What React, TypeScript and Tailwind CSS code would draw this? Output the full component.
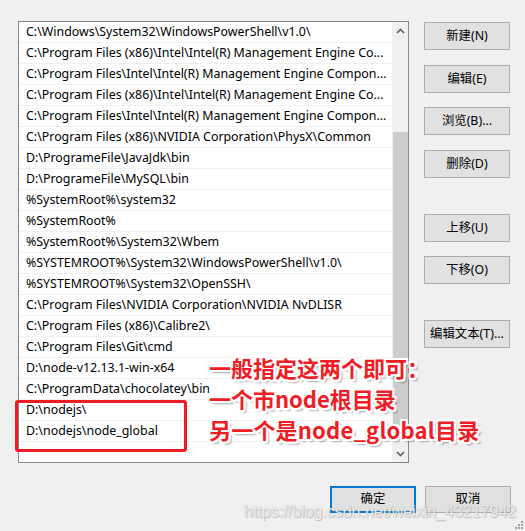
import React from 'react';

const paths = [
  'C:\\Windows\\System32\\WindowsPowerShell\\v1.0\\',
  'C:\\Program Files (x86)\\Intel\\Intel(R) Management Engine Co...',
  'C:\\Program Files\\Intel\\Intel(R) Management Engine Compon...',
  'C:\\Program Files (x86)\\Intel\\Intel(R) Management Engine Co...',
  'C:\\Program Files\\Intel\\Intel(R) Management Engine Compon...',
  'C:\\Program Files (x86)\\NVIDIA Corporation\\PhysX\\Common',
  'D:\\ProgrameFile\\JavaJdk\\bin',
  'D:\\ProgrameFile\\MySQL\\bin',
  '%SystemRoot%\\system32',
  '%SystemRoot%',
  '%SystemRoot%\\System32\\Wbem',
  '%SYSTEMROOT%\\System32\\WindowsPowerShell\\v1.0\\',
  '%SYSTEMROOT%\\System32\\OpenSSH\\',
  'C:\\Program Files\\NVIDIA Corporation\\NVIDIA NvDLISR',
  'C:\\Program Files (x86)\\Calibre2\\',
  'C:\\Program Files\\Git\\cmd',
  'D:\\node-v12.13.1-win-x64',
  'C:\\ProgramData\\chocolatey\\bin',
  'D:\\nodejs\\',
  'D:\\nodejs\\node_global',
];

const font = { fontFamily: '"Noto Sans", "Noto Sans CJK SC", sans-serif' };

const Btn = ({ label, className = '' }: { label: string; className?: string }) => (
  <div
    className={`w-[86px] h-[28px] flex items-center justify-center bg-[#e1e1e1] border border-[#adadad] text-[12.4px] text-black ${className}`}
  >
    {label}
  </div>
);

const App = () => {
  return (
    <div className="relative w-[525px] h-[531px] bg-[#f0f0f0] overflow-hidden" style={font}>
      <div className="flex">
        {/* path list */}
        <div className="ml-[18px] mt-[21px] w-[391px] h-[442px] border border-[#828790] bg-white flex">
          <div className="w-[373px] flex flex-col">
            {paths.map((p, i) => (
              <div
                key={i}
                className="h-[21px] shrink-0 border-b border-[#f0f0f0] px-[7px] flex items-center text-[12.4px] text-black whitespace-nowrap overflow-hidden"
              >
                {p}
              </div>
            ))}
          </div>
          <div className="w-[16px] bg-[#f0f0f0] flex flex-col items-center">
            <div className="h-[17px] flex items-center justify-center">
              <svg width="9" height="6" viewBox="0 0 9 6">
                <path d="M1 5 L4.5 1.5 L8 5" stroke="#606060" strokeWidth="1.6" fill="none" />
              </svg>
            </div>
            <div className="mt-[93px] w-[15px] h-[304px] bg-[#cdcdcd]" />
            <div className="flex-1" />
            <div className="h-[17px] flex items-center justify-center">
              <svg width="9" height="6" viewBox="0 0 9 6">
                <path d="M1 1 L4.5 4.5 L8 1" stroke="#606060" strokeWidth="1.6" fill="none" />
              </svg>
            </div>
          </div>
        </div>

        {/* side buttons */}
        <div className="ml-[15px] flex flex-col">
          <Btn label="新建(N)" className="mt-[22px]" />
          <Btn label="编辑(E)" className="mt-[15px]" />
          <Btn label="浏览(B)..." className="mt-[14px]" />
          <Btn label="删除(D)" className="mt-[15px]" />
          <Btn label="上移(U)" className="mt-[36px]" />
          <Btn label="下移(O)" className="mt-[14px]" />
          <Btn label="编辑文本(T)..." className="mt-[36px]" />
        </div>
      </div>

      {/* footer */}
      <div className="flex justify-end gap-[9px] pr-[14px] mt-[23px]">
        <div className="w-[86px] h-[27px] flex items-center justify-center bg-[#e1e1e1] border-2 border-[#0078d7] text-[12.4px] text-black">
          确定
        </div>
        <div className="w-[86px] h-[27px] flex items-center justify-center bg-[#e1e1e1] border border-[#adadad] text-[12.4px] text-black">
          取消
        </div>
      </div>

      {/* red highlight box */}
      <div className="absolute left-[15px] top-[400px] w-[172px] h-[52px] border-[3px] border-[#ec1c24] rounded-[3px]" />

      {/* annotation */}
      <div
        className="absolute left-[209px] top-[352px] text-[22px] leading-[31px] font-bold text-[#ee1d26] whitespace-nowrap"
        style={{
          fontFamily: '"Noto Sans CJK SC", sans-serif',
          textShadow:
            '-2px 0 0 #fff, 2px 0 0 #fff, 0 -2px 0 #fff, 0 2px 0 #fff, -2px -2px 0 #fff, 2px 2px 0 #fff, -2px 2px 0 #fff, 2px -2px 0 #fff, 3px 3px 2px rgba(0,0,0,0.35)',
        }}
      >
        <div>一般指定这两个即可：</div>
        <div>一个市node根目录</div>
        <div className="tracking-[0.2px]">另一个是node_global目录</div>
      </div>

      {/* watermark */}
      <div
        className="absolute left-[244px] top-[501px] text-[16px] leading-[22px] text-white/80 whitespace-nowrap"
        style={{
          fontFamily: '"Liberation Sans", sans-serif',
          textShadow: '0 0 1px rgba(120,120,120,0.6), 1px 1px 1px rgba(150,150,150,0.5)',
        }}
      >
        https://blog.csdn.net/weixin_43217942
      </div>

      {/* resize grip */}
      <svg className="absolute right-[2px] bottom-[2px]" width="8" height="8" viewBox="0 0 8 8">
        <rect x="6" y="0" width="2" height="2" fill="#a0a0a0" />
        <rect x="3" y="3" width="2" height="2" fill="#a0a0a0" />
        <rect x="6" y="3" width="2" height="2" fill="#a0a0a0" />
        <rect x="0" y="6" width="2" height="2" fill="#a0a0a0" />
        <rect x="3" y="6" width="2" height="2" fill="#a0a0a0" />
        <rect x="6" y="6" width="2" height="2" fill="#a0a0a0" />
      </svg>
    </div>
  );
};

export default App;
